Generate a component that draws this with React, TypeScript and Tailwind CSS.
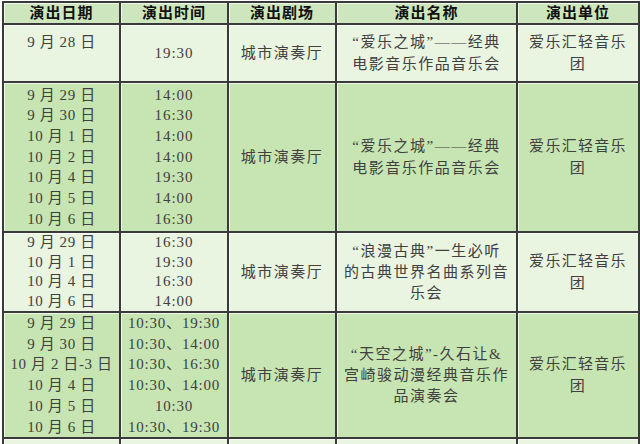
import React from "react";

const F = { fontFamily: '"Liberation Serif", "Noto Sans CJK SC", serif' };

const cell =
  "border-2 border-[#3a3a3a] text-center align-middle p-0 shadow-[inset_1px_1px_0_rgba(255,255,255,0.7)]";

function Lines({ items, lh = "leading-[20.7px]" }: { items: string[]; lh?: string }) {
  return (
    <div className="flex flex-col items-center">
      {items.map((t, i) => (
        <div key={i} className={lh + " whitespace-nowrap"}>
          {t}
        </div>
      ))}
    </div>
  );
}

const Unit = () => (
  <div className="leading-[22px] tracking-[1.3px]">
    爱乐汇轻音乐
    <br />团
  </div>
);

export default function App() {
  return (
    <div
      className="w-[640px] h-[444px] overflow-hidden bg-white pt-[1px] pl-[2px]"
      style={F}
    >
      <table className="border-collapse table-fixed w-[636px] text-[15px] text-[#404040] tracking-[0.6px]">
        <colgroup>
          <col className="w-[117px]" />
          <col className="w-[108px]" />
          <col className="w-[108px]" />
          <col className="w-[181px]" />
          <col className="w-[122px]" />
        </colgroup>
        <thead>
          <tr className="h-[22px] bg-[#cde6bd]">
            {["演出日期", "演出时间", "演出剧场", "演出名称", "演出单位"].map((h) => (
              <th key={h} className={cell + " font-bold text-[#111] tracking-[1px] text-[15px] leading-[18px]"}>
                {h}
              </th>
            ))}
          </tr>
        </thead>
        <tbody>
          <tr className="h-[58px] bg-[#e9f4e1]">
            <td className={cell + " !align-top pt-[6px]"}>9 月 28 日</td>
            <td className={cell + " tracking-[1px]"}>19:30</td>
            <td className={cell + " tracking-[1.5px]"}>城市演奏厅</td>
            <td className={cell + " tracking-[1.5px] leading-[22px]"}>
              “爱乐之城”——经典
              <br />
              电影音乐作品音乐会
            </td>
            <td className={cell}>
              <Unit />
            </td>
          </tr>
          <tr className="h-[150px] bg-[#c7e5b2]">
            <td className={cell}>
              <Lines
                items={["9 月 29 日", "9 月 30 日", "10 月 1 日", "10 月 2 日", "10 月 4 日", "10 月 5 日", "10 月 6 日"]}
              />
            </td>
            <td className={cell + " tracking-[1px]"}>
              <Lines items={["14:00", "16:30", "14:00", "14:00", "19:30", "14:00", "16:30"]} />
            </td>
            <td className={cell + " tracking-[1.5px]"}>城市演奏厅</td>
            <td className={cell + " tracking-[1.5px] leading-[22px]"}>
              “爱乐之城”——经典
              <br />
              电影音乐作品音乐会
            </td>
            <td className={cell}>
              <Unit />
            </td>
          </tr>
          <tr className="h-[79px] bg-[#e9f4e1]">
            <td className={cell}>
              <Lines lh="leading-[19.5px]" items={["9 月 29 日", "10 月 1 日", "10 月 4 日", "10 月 6 日"]} />
            </td>
            <td className={cell + " tracking-[1px]"}>
              <Lines lh="leading-[19.5px]" items={["16:30", "19:30", "16:30", "14:00"]} />
            </td>
            <td className={cell + " tracking-[1.5px]"}>城市演奏厅</td>
            <td className={cell + " tracking-[1.5px] leading-[21px]"}>
              “浪漫古典”一生必听
              <br />
              的古典世界名曲系列音
              <br />
              乐会
            </td>
            <td className={cell}>
              <Unit />
            </td>
          </tr>
          <tr className="h-[126px] bg-[#c7e5b2]">
            <td className={cell}>
              <Lines
                items={["9 月 29 日", "9 月 30 日", "10 月 2 日-3 日", "10 月 4 日", "10 月 5 日", "10 月 6 日"]}
              />
            </td>
            <td className={cell + " tracking-[0.8px]"}>
              <Lines
                items={["10:30、19:30", "10:30、14:00", "10:30、16:30", "10:30、14:00", "10:30", "10:30、19:30"]}
              />
            </td>
            <td className={cell + " tracking-[1.5px]"}>城市演奏厅</td>
            <td className={cell + " tracking-[1.5px] leading-[21px]"}>
              “天空之城”-久石让&amp;
              <br />
              宫崎骏动漫经典音乐作
              <br />
              品演奏会
            </td>
            <td className={cell}>
              <Unit />
            </td>
          </tr>
          <tr className="h-[40px] bg-[#e9f4e1]">
            <td className={cell}></td>
            <td className={cell}></td>
            <td className={cell}></td>
            <td className={cell}></td>
            <td className={cell}></td>
          </tr>
        </tbody>
      </table>
    </div>
  );
}
